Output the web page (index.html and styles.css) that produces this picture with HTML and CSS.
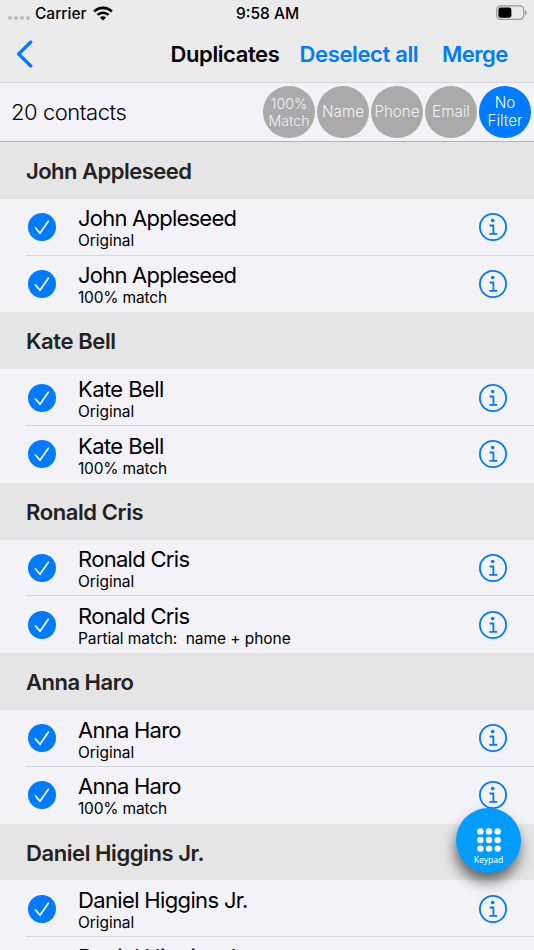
FILE: index.html
```html
<!DOCTYPE html>
<html lang="en">
<head>
    <meta charset="UTF-8">
    <meta name="viewport" content="width=device-width, initial-scale=1">
    <title>Duplicates</title>
    <link rel="stylesheet" href="styles.css">
</head>
<body>
    <!-- shared icons -->
    <svg class="icon-defs" aria-hidden="true">
        <symbol id="check" viewBox="0 0 28 28">
            <circle cx="14" cy="14" r="14" fill="#007aff"/>
            <path d="M7.5 15 L12 20.3 L20.3 8.2" fill="none" stroke="#fff" stroke-width="1.7" stroke-linecap="round" stroke-linejoin="round"/>
        </symbol>
        <symbol id="info" viewBox="0 0 28 28">
            <circle cx="14" cy="14" r="13.1" fill="none" stroke="#007aff" stroke-width="1.8"/>
            <circle cx="13.7" cy="7.5" r="1.8" fill="#007aff"/>
            <path d="M11.3 12.5 H14.4 V20.8 M11 20.8 H17.6" fill="none" stroke="#007aff" stroke-width="1.8" stroke-linecap="round" stroke-linejoin="round"/>
        </symbol>
    </svg>

    <div class="top">
        <div class="status-bar">
            <div class="status-left">
                <span class="signal"><i></i><i></i><i></i><i></i></span>
                <span class="carrier">Carrier</span>
                <svg class="wifi" viewBox="0 0 20 15">
                    <path d="M1.2 5.5 C6.2 .6 13.8 .6 18.8 5.5" fill="none" stroke="#000" stroke-width="2.7"/>
                    <path d="M4.4 8.9 C7.6 5.9 12.4 5.9 15.6 8.9" fill="none" stroke="#000" stroke-width="2.5"/>
                    <path d="M6.9 11.4 C8.7 9.8 11.3 9.8 13.1 11.4 L10 14.5 Z"/>
                </svg>
            </div>
            <span class="time">9:58 AM</span>
            <svg class="battery" viewBox="0 0 32 16">
                <rect x=".7" y=".8" width="27" height="13.6" rx="4" fill="none" stroke="#989898" stroke-width="1.2"/>
                <rect x="2.4" y="2.5" width="13" height="10.2" rx="2.3"/>
                <path d="M29 5.3 C31 6 31 9.2 29 9.9 Z" fill="#989898"/>
            </svg>
        </div>
        <div class="nav">
            <svg class="back" viewBox="0 0 18 28">
                <path d="M14.8 2 L2.6 14 L14.8 26" fill="none" stroke="#007aff" stroke-width="3.2" stroke-linecap="round" stroke-linejoin="round"/>
            </svg>
            <h1 class="title">Duplicates</h1>
            <a class="deselect">Deselect all</a>
            <a class="merge">Merge</a>
        </div>
    </div>

    <div class="filter-bar">
        <span class="count">20 contacts</span>
        <div class="filters">
            <span class="filter small">100%<br>Match</span>
            <span class="filter">Name</span>
            <span class="filter">Phone</span>
            <span class="filter">Email</span>
            <span class="filter active">No<br>Filter</span>
        </div>
    </div>

    <div class="list">
        <h2 class="group john">John Appleseed</h2>
        <div class="row">
            <svg class="icon"><use href="#check"/></svg>
            <div class="info"><div class="name john">John Appleseed</div><div class="match">Original</div></div>
            <svg class="icon"><use href="#info"/></svg>
        </div>
        <div class="row">
            <svg class="icon"><use href="#check"/></svg>
            <div class="info"><div class="name john">John Appleseed</div><div class="match full">100% match</div></div>
            <svg class="icon"><use href="#info"/></svg>
        </div>

        <h2 class="group kate">Kate Bell</h2>
        <div class="row">
            <svg class="icon"><use href="#check"/></svg>
            <div class="info"><div class="name kate">Kate Bell</div><div class="match">Original</div></div>
            <svg class="icon"><use href="#info"/></svg>
        </div>
        <div class="row">
            <svg class="icon"><use href="#check"/></svg>
            <div class="info"><div class="name kate">Kate Bell</div><div class="match full">100% match</div></div>
            <svg class="icon"><use href="#info"/></svg>
        </div>

        <h2 class="group ronald">Ronald Cris</h2>
        <div class="row">
            <svg class="icon"><use href="#check"/></svg>
            <div class="info"><div class="name ronald">Ronald Cris</div><div class="match">Original</div></div>
            <svg class="icon"><use href="#info"/></svg>
        </div>
        <div class="row">
            <svg class="icon"><use href="#check"/></svg>
            <div class="info"><div class="name ronald">Ronald Cris</div><div class="match">Partial match:&nbsp; name + phone</div></div>
            <svg class="icon"><use href="#info"/></svg>
        </div>

        <h2 class="group anna">Anna Haro</h2>
        <div class="row">
            <svg class="icon"><use href="#check"/></svg>
            <div class="info"><div class="name anna">Anna Haro</div><div class="match">Original</div></div>
            <svg class="icon"><use href="#info"/></svg>
        </div>
        <div class="row">
            <svg class="icon"><use href="#check"/></svg>
            <div class="info"><div class="name anna">Anna Haro</div><div class="match full">100% match</div></div>
            <svg class="icon"><use href="#info"/></svg>
        </div>

        <h2 class="group daniel">Daniel Higgins Jr.</h2>
        <div class="row">
            <svg class="icon"><use href="#check"/></svg>
            <div class="info"><div class="name daniel">Daniel Higgins Jr.</div><div class="match">Original</div></div>
            <svg class="icon"><use href="#info"/></svg>
        </div>
        <div class="row">
            <div class="info last"><div class="name daniel">Daniel Higgins Jr.</div></div>
        </div>
    </div>

    <div class="keypad">
        <svg class="dots" viewBox="0 0 24 24" fill="#fff">
            <circle cx="3.4" cy="3.4" r="3.2"/><circle cx="12" cy="3.4" r="3.2"/><circle cx="20.6" cy="3.4" r="3.2"/>
            <circle cx="3.4" cy="12" r="3.2"/><circle cx="12" cy="12" r="3.2"/><circle cx="20.6" cy="12" r="3.2"/>
            <circle cx="3.4" cy="20.6" r="3.2"/><circle cx="12" cy="20.6" r="3.2"/><circle cx="20.6" cy="20.6" r="3.2"/>
        </svg>
        <span>Keypad</span>
    </div>
</body>
</html>
```
FILE: styles.css
```css
* {
    box-sizing: border-box;
}
body {
    margin: 0;
    height: 950px;
    overflow: hidden;
    display: flex;
    flex-direction: column;
    background-color: #f2f2f7;
    color: #000;
    font-family: Inter, "Liberation Sans", sans-serif;
}
.icon-defs {
    display: none;
}
.top {
    flex: none;
    height: 83px;
    background-color: #ebebeb;
    border-bottom: 1px solid #d6d6d8;
}
.status-bar {
    display: grid;
    grid-template-columns: 1fr auto 1fr;
    align-items: center;
    height: 26px;
    padding: 0 7px 0 8px;
    font-size: 15.5px;
    font-weight: 500;
}
.status-left {
    display: flex;
    align-items: center;
}
.signal {
    display: flex;
    gap: 2px;
    margin: 9px 5px 0 0;
}
.signal i {
    width: 4px;
    height: 4px;
    border-radius: 50%;
    background-color: #bdbdbd;
}
.wifi {
    width: 20px;
    height: 15px;
    margin-left: 6px;
}
.battery {
    width: 32px;
    height: 16px;
    justify-self: end;
    margin-right: -1px;
}
.nav {
    display: flex;
    align-items: center;
    height: 56px;
    padding-left: 16px;
    font-size: 22px;
    font-weight: 600;
    white-space: nowrap;
}
.back {
    width: 18px;
    height: 28px;
}
.title {
    width: 129px;
    margin: 0 0 0 136.5px;
    font-size: 22px;
    font-weight: 600;
    letter-spacing: -0.4px;
}
.deselect {
    width: 142.5px;
    color: #007aff;
    letter-spacing: -0.36px;
}
.merge {
    color: #007aff;
    letter-spacing: -0.5px;
}
.filter-bar {
    flex: none;
    display: flex;
    align-items: center;
    justify-content: space-between;
    height: 59px;
    padding: 0.6px 3.2px 0 11px;
    border-bottom: 1px solid #b4b4b6;
}
.count {
    font-size: 22px;
    font-weight: 300;
    letter-spacing: -0.45px;
}
.filters {
    display: flex;
    gap: 2.3px;
}
.filter {
    display: flex;
    align-items: center;
    justify-content: center;
    width: 51.7px;
    height: 51.7px;
    border-radius: 50%;
    background-color: #aaa;
    color: #f2f2f7;
    font-size: 15.2px;
    font-weight: 300;
    line-height: 18px;
    text-align: center;
}
.filter.small {
    font-size: 14.2px;
    line-height: 17px;
}
.filter.active {
    background-color: #007aff;
    color: #fff;
}
.list {
    flex: none;
}
.group {
    height: 56.8px;
    margin: 0;
    padding-left: 26px;
    background-color: #e5e5e5;
    color: #222;
    font-size: 22px;
    font-weight: 600;
    line-height: 58px;
}
.row {
    display: flex;
    align-items: center;
    position: relative;
    height: 56.8px;
    padding: 0 27px 0 28px;
}
/* separator starts at the text inset, only between two rows */
.row + .row::before {
    content: "";
    position: absolute;
    top: -1px;
    left: 26px;
    right: 0;
    height: 1px;
    background-color: #d4d4d9;
}
.icon {
    width: 28px;
    height: 28px;
}
.info {
    flex: 1;
    padding: 2.6px 0 0 22px;
}
.info.last {
    align-self: flex-start;
    padding: 8px 0 0 50px;
}
.name {
    font-size: 22px;
    line-height: 25px;
}
.match {
    font-size: 15.5px;
    line-height: 19px;
    letter-spacing: -0.06px;
}
.match.full {
    letter-spacing: -0.18px;
}
/* tracking per contact name */
.name.john { letter-spacing: -0.77px; }
.name.kate { letter-spacing: -0.6px; }
.name.ronald { letter-spacing: -0.7px; }
.name.anna { letter-spacing: -0.75px; }
.name.daniel { letter-spacing: -0.65px; }
.group.john { letter-spacing: -0.52px; }
.group.kate { letter-spacing: -0.4px; }
.group.ronald { letter-spacing: -0.4px; }
.group.anna { letter-spacing: -0.5px; }
.group.daniel { letter-spacing: -0.42px; }
.keypad {
    position: absolute;
    left: 456px;
    top: 807.5px;
    display: flex;
    flex-direction: column;
    align-items: center;
    width: 65px;
    height: 65px;
    padding-top: 20.5px;
    border-radius: 50%;
    background-color: #009cff;
    box-shadow: -1px 9px 13px rgba(0, 0, 0, 0.55);
    color: #fff;
    font-family: "Noto Sans", sans-serif;
    font-size: 8.5px;
    line-height: 13px;
}
.dots {
    flex: none;
    width: 24px;
    height: 24px;
    margin-bottom: 1px;
}
```
